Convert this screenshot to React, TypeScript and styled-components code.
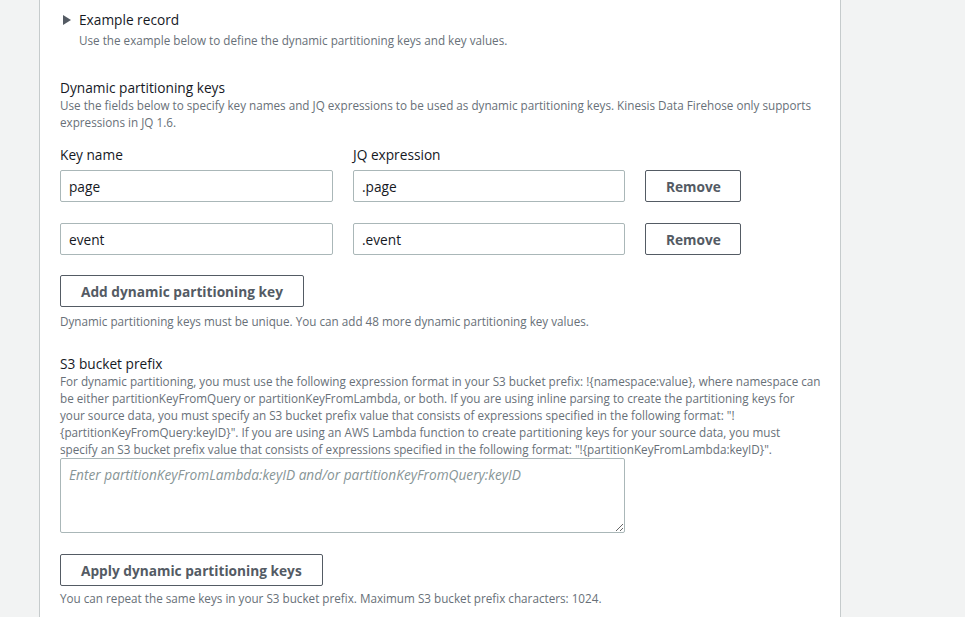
import React from "react";
import styled, { createGlobalStyle } from "styled-components";

const Global = createGlobalStyle`
  html, body { margin: 0; padding: 0; }
  body {
    background: #f2f3f3;
    font-family: "Open Sans", "Noto Sans", "Liberation Sans", sans-serif;
    color: #16191f;
    -webkit-font-smoothing: antialiased;
  }
`;

const Page = styled.div`
  display: flex;
  height: 617px;
  overflow: hidden;
`;

const Gutter = styled.div`
  width: 39px;
  flex: none;
`;

const Panel = styled.main`
  flex: none;
  width: 802px;
  box-sizing: border-box;
  background: #ffffff;
  border-left: 1px solid #c6cbcc;
  border-right: 1px solid #c6cbcc;
  padding: 10px 19px 0 20px;
`;

const Expander = styled.div`
  display: flex;
  align-items: flex-start;
  gap: 8px;
  padding-left: 3px;
`;

const Caret = styled.svg`
  width: 8px;
  height: 10px;
  margin-top: 5px;
  flex: none;
`;

const Heading = styled.div`
  font-size: 13.7px;
  line-height: 20px;
  color: #16191f;
`;

const Desc = styled.div<{ $mt?: number }>`
  font-size: 11.7px;
  line-height: 17px;
  color: #687078;
  margin-top: ${(p) => p.$mt ?? -1}px;
`;

const Section = styled.section<{ $mt: number }>`
  margin-top: ${(p) => p.$mt}px;
`;

const Grid = styled.div`
  display: grid;
  grid-template-columns: 273px 272px 96px;
  column-gap: 20px;
  row-gap: 21px;
  margin-top: 14px;
  align-items: center;
`;

const Label = styled.div`
  font-size: 13.7px;
  line-height: 20px;
  color: #16191f;
  margin-bottom: -16px;
`;

const Input = styled.input`
  box-sizing: border-box;
  height: 32px;
  width: 100%;
  border: 1px solid #aab7b8;
  border-radius: 2px;
  padding: 0 8px;
  font-family: inherit;
  font-size: 13.7px;
  color: #16191f;
  background: #fff;
  outline: none;
`;

const Button = styled.button`
  box-sizing: border-box;
  height: 32px;
  border: 1px solid #545b64;
  border-radius: 2px;
  background: #fff;
  color: #545b64;
  font-family: inherit;
  font-weight: 700;
  font-size: 13.7px;
  padding: 0 20px;
  cursor: pointer;
  justify-self: start;
`;

const WideButton = styled(Button)`
  width: 100%;
`;

const ActionRow = styled.div<{ $mt: number }>`
  margin-top: ${(p) => p.$mt}px;
`;

const TextArea = styled.textarea`
  display: block;
  box-sizing: border-box;
  width: 565px;
  height: 75px;
  margin: 0;
  border: 1px solid #aab7b8;
  border-radius: 2px;
  padding: 6px 8px;
  font-family: inherit;
  font-size: 13.7px;
  line-height: 20px;
  color: #16191f;
  resize: vertical;
  outline: none;
  &::placeholder {
    color: #879596;
    font-style: italic;
  }
`;

const Hint = styled.div<{ $mt: number }>`
  font-size: 11.7px;
  line-height: 17px;
  color: #687078;
  margin-top: ${(p) => p.$mt}px;
`;

const keys = [
  { name: "page", expr: ".page" },
  { name: "event", expr: ".event" },
];

export default function App() {
  return (
    <>
      <Global />
      <Page>
        <Gutter />
        <Panel>
          <Expander>
            <Caret viewBox="0 0 8 10">
              <path d="M0 0 L8 5 L0 10 Z" fill="#545b64" />
            </Caret>
            <div>
              <Heading>Example record</Heading>
              <Desc $mt={2}>Use the example below to define the dynamic partitioning keys and key values.</Desc>
            </div>
          </Expander>

          <Section $mt={29}>
            <Heading>Dynamic partitioning keys</Heading>
            <Desc>
              Use the fields below to specify key names and JQ expressions to be used as dynamic partitioning keys.
              Kinesis Data Firehose only supports expressions in JQ 1.6.
            </Desc>
            <Grid>
              <Label>Key name</Label>
              <Label>JQ expression</Label>
              <div />
              {keys.map((k) => (
                <React.Fragment key={k.name}>
                  <Input defaultValue={k.name} />
                  <Input defaultValue={k.expr} />
                  <WideButton>Remove</WideButton>
                </React.Fragment>
              ))}
            </Grid>
            <ActionRow $mt={20}>
              <Button>Add dynamic partitioning key</Button>
              <Hint $mt={6}>Dynamic partitioning keys must be unique. You can add 48 more dynamic partitioning key values.</Hint>
            </ActionRow>
          </Section>

          <Section $mt={24}>
            <Heading>S3 bucket prefix</Heading>
            <Desc>
              For dynamic partitioning, you must use the following expression format in your S3 bucket prefix:
              !&#123;namespace:value&#125;, where namespace can be either partitionKeyFromQuery or
              partitionKeyFromLambda, or both. If you are using inline parsing to create the partitioning keys for
              your source data, you must specify an S3 bucket prefix value that consists of expressions specified in
              the following format: "!&#123;partitionKeyFromQuery:keyID&#125;". If you are using an AWS Lambda
              function to create partitioning keys for your source data, you must specify&nbsp;an S3 bucket prefix
              value that consists of expressions specified in the following format:
              "!&#123;partitionKeyFromLambda:keyID&#125;".
            </Desc>
            <TextArea placeholder="Enter partitionKeyFromLambda:keyID and/or partitionKeyFromQuery:keyID" />
            <ActionRow $mt={21}>
              <Button>Apply dynamic partitioning keys</Button>
              <Hint $mt={4}>You can repeat the same keys in your S3 bucket prefix. Maximum S3 bucket prefix characters: 1024.</Hint>
            </ActionRow>
          </Section>
        </Panel>
      </Page>
    </>
  );
}
